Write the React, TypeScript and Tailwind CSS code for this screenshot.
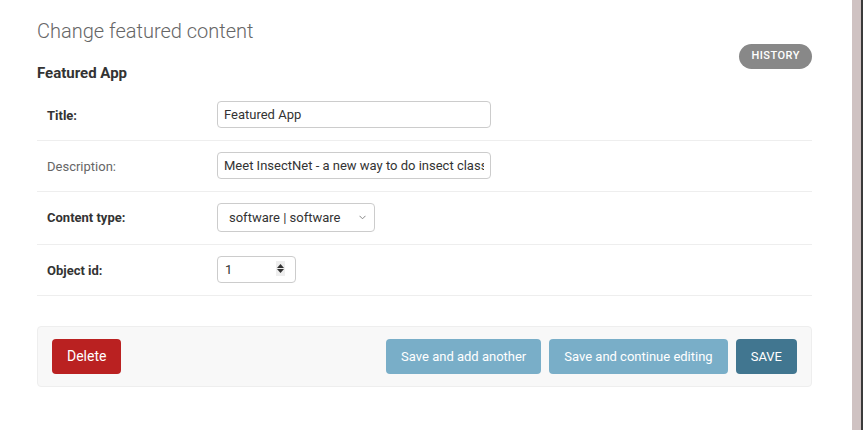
import { ChangeEvent, useState } from "react";

type Field = {
  name: string;
  label: string;
  required: boolean;
};

const Row = ({ field, children }: { field: Field; children: React.ReactNode }) => (
  <div className="flex items-start border-b border-[#eeeeee] pl-[10px] pt-[11px] pb-[12px]">
    <label
      className={
        "w-[170px] shrink-0 pt-[7px] text-[13px] leading-[16px] " +
        (field.required ? "font-bold text-[#333333]" : "text-[#666666]")
      }
    >
      {field.label}:
    </label>
    {children}
  </div>
);

const App = () => {
  const [title, setTitle] = useState("Featured App");
  const [description, setDescription] = useState(
    "Meet InsectNet - a new way to do insect classification"
  );
  const [objectId, setObjectId] = useState("1");

  return (
    <div className="flex min-h-[430px] bg-white font-['Roboto','Liberation_Sans',sans-serif] text-[#333333]">
      <main className="flex-1 pl-[37px] pr-[40px] pt-[19px]">
        <h1 className="h-[24px] text-[20px] font-light leading-[24px] text-[#666666]">
          Change featured content
        </h1>
        <div className="mt-[1px] flex items-start justify-between">
          <h2 className="mt-[20px] text-[15px] font-bold leading-[18px] text-[#333333]">Featured App</h2>
          <a className="flex h-[25px] items-center rounded-full bg-[#888888] px-[12px] text-[11px] font-medium uppercase tracking-[0.5px] text-white">
            History
          </a>
        </div>

        <fieldset className="mt-[8px]">
          <Row field={{ name: "title", label: "Title", required: true }}>
            <input
              value={title}
              onChange={(e: ChangeEvent<HTMLInputElement>) => setTitle(e.target.value)}
              className="h-[27px] w-[274px] rounded-[4px] border border-[#cccccc] px-[6px] text-[13px] text-[#333333] outline-none"
            />
          </Row>
          <Row field={{ name: "description", label: "Description", required: false }}>
            <input
              value={description}
              onChange={(e: ChangeEvent<HTMLInputElement>) => setDescription(e.target.value)}
              className="h-[27px] w-[274px] rounded-[4px] border border-[#cccccc] px-[6px] text-[13px] text-[#333333] outline-none"
            />
          </Row>
          <Row field={{ name: "content_type", label: "Content type", required: true }}>
            <div className="relative">
              <select className="h-[29px] w-[158px] appearance-none rounded-[4px] border border-[#cccccc] bg-white pl-[11px] text-[13px] text-[#333333] outline-none">
                <option>software | software</option>
              </select>
              <svg
                className="pointer-events-none absolute right-[9px] top-[12px]"
                width="7"
                height="5"
                viewBox="0 0 7 5"
                fill="none"
              >
                <path d="M0.5 0.8 L3.5 3.8 L6.5 0.8" stroke="#888" strokeWidth="1" />
              </svg>
            </div>
          </Row>
          <Row field={{ name: "object_id", label: "Object id", required: true }}>
            <div className="relative">
              <input
                value={objectId}
                onChange={(e: ChangeEvent<HTMLInputElement>) => setObjectId(e.target.value)}
                className="h-[27px] w-[79px] rounded-[4px] border border-[#cccccc] px-[7px] text-[13px] text-[#333333] outline-none"
              />
              <div className="pointer-events-none absolute left-[59px] top-[5px] flex h-[15px] w-[9px] flex-col items-center justify-center gap-[1px] bg-[#eeeeee]">
                <svg width="7" height="4" viewBox="0 0 7 4">
                  <path d="M3.5 0 L7 4 L0 4 Z" fill="#333" />
                </svg>
                <svg width="7" height="4" viewBox="0 0 7 4">
                  <path d="M0 0 L7 0 L3.5 4 Z" fill="#333" />
                </svg>
              </div>
            </div>
          </Row>
        </fieldset>

        <div className="mt-[30px] flex items-center rounded-[4px] border border-[#eeeeee] bg-[#f8f8f8] py-[12px] pl-[14px] pr-[14px]">
          <a className="flex h-[35px] items-center rounded-[4px] bg-[#ba2121] px-[15px] text-[14px] text-white">
            Delete
          </a>
          <div className="ml-auto flex gap-[8px]">
            <button className="h-[35px] rounded-[4px] bg-[#79aec8] px-[15px] text-[13px] text-white">
              Save and add another
            </button>
            <button className="h-[35px] rounded-[4px] bg-[#79aec8] px-[15px] text-[13px] text-white">
              Save and continue editing
            </button>
            <button className="h-[35px] rounded-[4px] bg-[#417690] px-[15px] text-[13px] text-white">
              SAVE
            </button>
          </div>
        </div>
      </main>
      <div className="w-[9px] shrink-0 bg-[#cfc2c2]" />
      <div className="w-[2px] shrink-0 bg-[#3a3a3a]" />
    </div>
  );
};

export default App;
